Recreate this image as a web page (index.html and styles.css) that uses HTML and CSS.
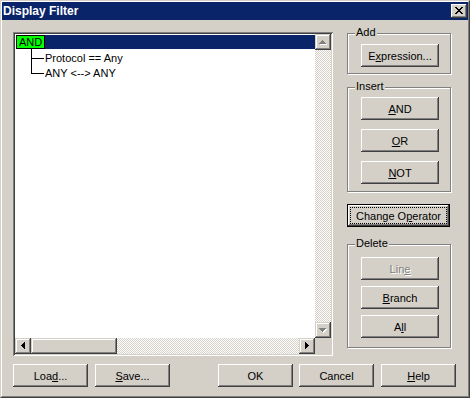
FILE: index.html
```html
<!DOCTYPE html>
<html lang="en">
<head>
    <meta charset="UTF-8">
    <title>Display Filter</title>
    <link rel="stylesheet" href="styles.css">
</head>
<body>
    <div class="window">
        <div class="frame">
            <div class="titlebar">
                <span class="title">Display Filter</span>
                <button class="close-button">
                    <svg width="16" height="14" viewBox="0 0 16 14" shape-rendering="crispEdges">
                        <path fill="#000" d="M4 3h2v1H4zM10 3h2v1h-2zM5 4h2v1H5zM9 4h2v1H9zM6 5h4v1H6zM7 6h2v1H7zM6 7h4v1H6zM5 8h2v1H5zM9 8h2v1H9zM4 9h2v1H4zM10 9h2v1h-2z"/>
                    </svg>
                </button>
            </div>

            <div class="content">
                <div class="top-row">
                    <div class="tree">
                        <div class="tree-main">
                            <div class="node root-node">
                                <span class="operator">AND</span>
                                <span class="selection"></span>
                            </div>
                            <div class="node child-node">
                                <span class="elbow"></span>
                                <span class="label">Protocol == Any</span>
                            </div>
                            <div class="node child-node last">
                                <span class="elbow"></span>
                                <span class="label">ANY &lt;--&gt; ANY</span>
                            </div>
                        </div>

                        <div class="vscroll">
                            <div class="arrow">
                                <svg width="16" height="16" viewBox="0 0 16 16" shape-rendering="crispEdges">
                                    <path fill="#fff" transform="translate(1 1)" d="M7 6h1v1h1v1h1v1h1v1H4V9h1V8h1V7h1z"/>
                                    <path fill="#808080" d="M7 6h1v1h1v1h1v1h1v1H4V9h1V8h1V7h1z"/>
                                </svg>
                            </div>
                            <div class="track"></div>
                            <div class="arrow">
                                <svg width="16" height="16" viewBox="0 0 16 16" shape-rendering="crispEdges">
                                    <path fill="#fff" transform="translate(1 1)" d="M4 6h7v1h-1v1H9v1H8v1H7V9H6V8H5V7H4z"/>
                                    <path fill="#808080" d="M4 6h7v1h-1v1H9v1H8v1H7V9H6V8H5V7H4z"/>
                                </svg>
                            </div>
                        </div>

                        <div class="hscroll">
                            <div class="arrow">
                                <svg width="16" height="16" viewBox="0 0 16 16" shape-rendering="crispEdges">
                                    <path fill="#000" d="M9 4h1v7H9V10H8V9H7V8H6V7h1V6h1V5h1z"/>
                                </svg>
                            </div>
                            <div class="thumb"></div>
                            <div class="track"></div>
                            <div class="arrow">
                                <svg width="16" height="16" viewBox="0 0 16 16" shape-rendering="crispEdges">
                                    <path fill="#000" d="M6 4h1v1h1v1h1v1h1v1H9v1H8v1H7v1H6z"/>
                                </svg>
                            </div>
                        </div>

                        <div class="corner"></div>
                    </div>

                    <div class="side">
                        <div class="group add-group">
                            <span class="group-label">Add</span>
                            <button class="btn side-btn">E<u>x</u>pression...</button>
                        </div>

                        <div class="group insert-group">
                            <span class="group-label">Insert</span>
                            <button class="btn side-btn"><u>A</u>ND</button>
                            <button class="btn side-btn"><u>O</u>R</button>
                            <button class="btn side-btn"><u>N</u>OT</button>
                        </div>

                        <button class="btn default-btn">Change O<u>p</u>erator<span class="focus"></span></button>

                        <div class="group delete-group">
                            <span class="group-label">Delete</span>
                            <button class="btn side-btn disabled" disabled>Lin<u>e</u></button>
                            <button class="btn side-btn"><u>B</u>ranch</button>
                            <button class="btn side-btn">A<u>l</u>l</button>
                        </div>
                    </div>
                </div>

                <div class="bottom-row">
                    <button class="btn">Loa<u>d</u>...</button>
                    <button class="btn save-btn"><u>S</u>ave...</button>
                    <button class="btn ok-btn">OK</button>
                    <button class="btn cancel-btn">Cancel</button>
                    <button class="btn help-btn"><u>H</u>elp</button>
                </div>
            </div>
        </div>
    </div>
</body>
</html>
```

FILE: styles.css
```css
body {
    margin: 0;
    font-family: "Liberation Sans", Arial, sans-serif;
    font-size: 11px;
    color: #000;
    background-color: #d4d0c8;
}
.window {
    width: 470px;
    height: 398px;
    box-sizing: border-box;
    border: 1px solid;
    border-color: #d4d0c8 #404040 #404040 #d4d0c8;
    background-color: #d4d0c8;
}
.frame {
    height: 100%;
    box-sizing: border-box;
    border: 1px solid;
    border-color: #fff #808080 #808080 #fff;
}
.titlebar {
    height: 18px;
    display: flex;
    align-items: center;
    justify-content: space-between;
    padding: 0 1px 0 1px;
    background-color: #0a246a;
}
.title {
    color: #fff;
    font-weight: bold;
    font-size: 12px;
}
.close-button {
    width: 16px;
    height: 14px;
    padding: 0;
    border: 0;
    background-color: #d4d0c8;
    box-shadow: inset -1px -1px #404040, inset 1px 1px #fff, inset -2px -2px #808080;
    display: block;
}
.close-button svg {
    display: block;
}
.content {
    padding: 12px 0 0 11px;
}
.top-row {
    display: flex;
    gap: 14px;
}

/* tree view */
.tree {
    width: 320px;
    height: 324px;
    box-sizing: border-box;
    padding: 2px;
    background-color: #fff;
    box-shadow: inset 1px 1px #808080, inset -1px -1px #fff, inset 2px 2px #404040, inset -2px -2px #d4d0c8;
    display: grid;
    grid-template-columns: 300px 16px;
    grid-template-rows: 304px 16px;
}
.tree-main {
    padding: 1px 0 0 1px;
}
.node {
    display: flex;
}
.root-node {
    height: 14px;
}
.operator {
    border: 1px solid #000;
    background-color: #00ff00;
    padding: 0 2px;
    line-height: 12px;
}
.selection {
    flex: 1;
    background-color: #0a246a;
}
.child-node {
    height: 15px;
    padding-left: 15px;
    line-height: 19px;
}
.elbow {
    width: 13px;
    background:
        linear-gradient(#000, #000) 0 0 / 1px 100% no-repeat,
        linear-gradient(#000, #000) 0 9px / 100% 1px no-repeat;
}
.child-node.last .elbow {
    background:
        linear-gradient(#000, #000) 0 0 / 1px 10px no-repeat,
        linear-gradient(#000, #000) 0 9px / 100% 1px no-repeat;
}
.label {
    margin-left: 1px;
    white-space: nowrap;
}

/* scrollbars */
.vscroll {
    display: flex;
    flex-direction: column;
}
.hscroll {
    display: flex;
}
.arrow, .thumb {
    width: 16px;
    height: 16px;
    background-color: #d4d0c8;
    box-shadow: inset -1px -1px #404040, inset 1px 1px #d4d0c8, inset -2px -2px #808080, inset 2px 2px #fff;
}
.arrow svg {
    display: block;
}
.thumb {
    width: 86px;
}
.track {
    flex: 1;
    background: repeating-conic-gradient(#d4d0c8 0 25%, #fff 0 50%) 0 0 / 2px 2px;
}
.corner {
    background-color: #d4d0c8;
}

/* right side */
.side {
    width: 104px;
    padding-top: 1px;
}
.group {
    position: relative;
    box-sizing: border-box;
    border: 1px solid #808080;
    box-shadow: inset 1px 1px #fff, 1px 1px #fff;
    display: flex;
    flex-direction: column;
    align-items: flex-start;
    padding-left: 13px;
}
.group-label {
    position: absolute;
    top: -8px;
    left: 7px;
    padding: 0 1px;
    background-color: #d4d0c8;
    line-height: 13px;
}
.add-group {
    height: 41px;
    padding-top: 10px;
}
.insert-group {
    height: 105px;
    margin-top: 13px;
    padding-top: 9px;
    gap: 9px;
}
.delete-group {
    height: 104px;
    margin-top: 17px;
    padding-top: 12px;
    gap: 6px;
}

/* buttons */
.btn {
    width: 75px;
    height: 23px;
    padding: 0;
    border: 0;
    background-color: #d4d0c8;
    box-shadow: inset -1px -1px #404040, inset 1px 1px #fff, inset -2px -2px #808080;
    font-family: "Liberation Sans", Arial, sans-serif;
    font-size: 11px;
    color: #000;
}
.side-btn {
    width: 78px;
}
.disabled {
    color: #808080;
    text-shadow: 1px 1px #fff;
}
.default-btn {
    position: relative;
    display: block;
    width: 103px;
    margin-top: 12px;
    border: 1px solid #000;
    box-shadow: inset -1px -1px #404040, inset 1px 1px #fff, inset -2px -2px #808080;
}
.focus {
    position: absolute;
    top: 2px;
    left: 2px;
    right: 2px;
    bottom: 2px;
    border: 1px dotted #000;
}
.bottom-row {
    display: flex;
    margin-top: 8px;
}
.save-btn {
    margin-left: 7px;
}
.ok-btn {
    margin-left: 48px;
}
.cancel-btn {
    margin-left: 6px;
}
.help-btn {
    margin-left: 7px;
}
```
